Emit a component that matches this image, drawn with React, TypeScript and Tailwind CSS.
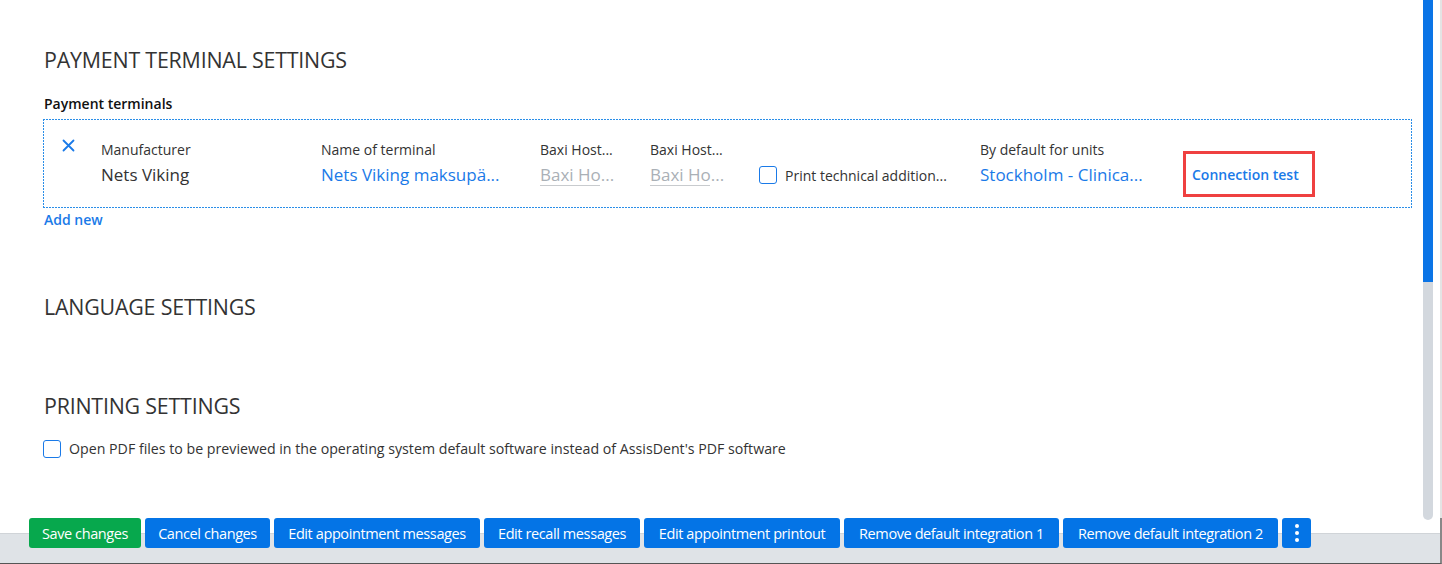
import React from "react";

const FONT = { fontFamily: '"Open Sans", "Noto Sans", sans-serif' };

function Heading({ children, className = "" }: { children: React.ReactNode; className?: string }) {
  return (
    <h2 className={`text-[21.4px] leading-[30px] font-normal text-[#333] tracking-[-0.2px] ${className}`}>{children}</h2>
  );
}

function Col({ w, label, children }: { w: string; label?: string; children: React.ReactNode }) {
  return (
    <div className={`${w} shrink-0 pt-[2px]`}>
      <div className="text-[14px] leading-[20px] text-[#333] h-[20px] whitespace-nowrap">{label}</div>
      <div className="mt-[3px] h-[24px] text-[17px] leading-[24px] whitespace-nowrap">{children}</div>
    </div>
  );
}

function Placeholder() {
  return (
    <div className="relative h-[24px] text-[#aab0b6]">
      Baxi Ho...
      <div className="absolute left-0 bottom-[1px] w-[60px] h-px bg-[#c8cbce]" />
    </div>
  );
}

const buttons: { label: string; w: string; green?: boolean }[] = [
  { label: "Save changes", w: "w-[112px]", green: true },
  { label: "Cancel changes", w: "w-[125px]" },
  { label: "Edit appointment messages", w: "w-[206px]" },
  { label: "Edit recall messages", w: "w-[156px]" },
  { label: "Edit appointment printout", w: "w-[196px]" },
  { label: "Remove default integration 1", w: "w-[215px]" },
  { label: "Remove default integration 2", w: "w-[215px]" },
];

export default function App() {
  return (
    <div style={FONT} className="w-[1442px] h-[564px] flex flex-col bg-white overflow-hidden">
      <div className="flex flex-1 min-h-0 border-r-2 border-[#e4e4e4]">
        <div className="flex-1 pl-[44px] pr-[11px] pt-[45px]">
          <Heading>PAYMENT TERMINAL SETTINGS</Heading>
          <div className="mt-[19px] text-[14px] leading-[20px] font-semibold text-[#111]">Payment terminals</div>
          <div className="mt-[5px] -ml-px pt-[19px] pb-[21px] pl-[19px] flex items-start [background:repeating-linear-gradient(90deg,#2a8ee8_0_2px,transparent_2px_3px)_top/100%_1px_no-repeat,repeating-linear-gradient(90deg,#2a8ee8_0_2px,transparent_2px_3px)_bottom/100%_1px_no-repeat,repeating-linear-gradient(0deg,#2a8ee8_0_2px,transparent_2px_3px)_left/1px_100%_no-repeat,repeating-linear-gradient(0deg,#2a8ee8_0_2px,transparent_2px_3px)_right/1px_100%_no-repeat]">
            <div className="w-[39px] shrink-0 pt-[1px]">
              <svg width="13" height="13" viewBox="0 0 13 13" className="block">
                <path d="M1.5 1.5 L11.5 11.5 M11.5 1.5 L1.5 11.5" stroke="#1a7ae8" strokeWidth="1.8" strokeLinecap="round" />
              </svg>
            </div>
            <Col w="w-[220px]" label="Manufacturer">
              <span className="text-[#333]">Nets Viking</span>
            </Col>
            <Col w="w-[219px]" label="Name of terminal">
              <span className="text-[#1a7ae8]">Nets Viking maksupä...</span>
            </Col>
            <Col w="w-[110px]" label="Baxi Host...">
              <Placeholder />
            </Col>
            <Col w="w-[109px]" label="Baxi Host...">
              <Placeholder />
            </Col>
            <div className="w-[221px] shrink-0 pt-[2px]">
              <div className="h-[20px]" />
              <div className="mt-[3px] h-[24px] flex items-center">
                <span className="w-[18px] h-[18px] rounded-[3px] border-[1.5px] border-[#1a7ae8] bg-white" />
                <span className="ml-[8px] text-[14px] text-[#333] whitespace-nowrap">Print technical addition...</span>
              </div>
            </div>
            <Col w="w-[203px]" label="By default for units">
              <span className="text-[#1a7ae8]">Stockholm - Clinica...</span>
            </Col>
            <div className="shrink-0 pt-[2px]">
              <div className="h-[20px]" />
              <div className="relative mt-[2px] h-[24px] flex items-center pl-[9px]">
                <span className="text-[14px] font-semibold text-[#1a7ae8] whitespace-nowrap">Connection test</span>
                <div className="absolute left-0 top-[-11px] w-[132px] h-[46px] border-[3px] border-[#ef4040]" />
              </div>
            </div>
          </div>
          <div className="mt-[2px] text-[14px] leading-[20px] font-semibold text-[#1a7ae8]">Add new</div>
          <Heading className="mt-[62px]">LANGUAGE SETTINGS</Heading>
          <Heading className="mt-[69px]">PRINTING SETTINGS</Heading>
          <div className="mt-[18px] -ml-px h-[20px] flex items-center">
            <span className="w-[18px] h-[18px] rounded-[3px] border-[1.5px] border-[#1a7ae8] bg-white" />
            <span className="ml-[8px] text-[14.2px] text-[#333] whitespace-nowrap">
              Open PDF files to be previewed in the operating system default software instead of AssisDent's PDF software
            </span>
          </div>
        </div>
        <div className="w-[10px] shrink-0 mr-[7px] flex flex-col">
          <div className="h-[287px] bg-[#0a74e6] rounded-b-[5px]" />
          <div className="flex-1 -mt-[5px] bg-[#d3d8de] rounded-b-[5px] mb-[-2px] -z-0" />
        </div>
      </div>
      <div className="h-[46px] shrink-0 flex items-start gap-[4px] pl-[29px] bg-[linear-gradient(to_bottom,#ffffff_15px,#d0d4d8_15px,#d0d4d8_16px,#dfe3e7_16px)] border-r-2 border-b border-r-[#888] border-b-[#555]">
        {buttons.map((b) => (
          <button
            key={b.label}
            className={`${b.w} h-[30px] pt-[1px] rounded-[3px] text-white text-[14.5px] tracking-[-0.4px] whitespace-nowrap flex items-center justify-center ${
              b.green ? "bg-[#07a84d]" : "bg-[#0474e6]"
            }`}
          >
            {b.label}
          </button>
        ))}
        <button className="w-[29px] h-[30px] rounded-[3px] bg-[#0474e6] flex flex-col items-center justify-center gap-[3px]">
          <span className="w-[4px] h-[4px] rounded-full bg-white" />
          <span className="w-[4px] h-[4px] rounded-full bg-white" />
          <span className="w-[4px] h-[4px] rounded-full bg-white" />
        </button>
      </div>
    </div>
  );
}
